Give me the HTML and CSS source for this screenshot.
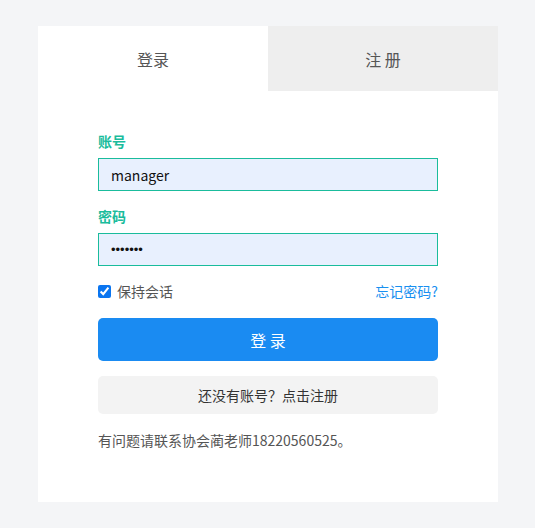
FILE: index.html
```html
<!DOCTYPE html>
<html lang="zh-CN">

<head>
    <meta charset="UTF-8">
    <title>登录</title>
    <link rel="stylesheet" href="styles.css">
</head>

<body>
    <div class="login-box">
        <div class="tab-list">
            <div class="tab tab-current">登录</div>
            <div class="tab">注 册</div>
        </div>
        <form class="login-form">
            <label class="field-label" for="username">账号</label>
            <input class="field-input" id="username" type="text" value="manager">
            <label class="field-label" for="password">密码</label>
            <input class="field-input field-password" id="password" type="password" value="1234567">
            <div class="option-row">
                <label class="keep"><input type="checkbox" checked> 保持会话</label>
                <a class="forget" href="#">忘记密码?</a>
            </div>
            <button class="btn btn-login" type="button">登 录</button>
            <button class="btn btn-register" type="button">还没有账号？点击注册</button>
            <p class="tip">有问题请联系协会蔺老师18220560525。</p>
        </form>
    </div>
</body>

</html>
```

FILE: styles.css
```css
body {
    margin: 0;
    padding-top: 26px;
    background: #f4f5f7;
    font-family: "Noto Sans CJK SC", "Noto Sans", sans-serif;
    font-size: 14px;
    color: #555;
}

.login-box {
    width: 460px;
    height: 476px;
    margin-left: 38px;
    background: #fff;
}

.tab-list {
    display: flex;
    height: 65px;
}

.tab {
    flex: 1;
    display: flex;
    align-items: center;
    justify-content: center;
    font-size: 16px;
    color: #555;
    background: #eee;
}

.tab-current {
    background: #fff;
}

.login-form {
    display: flex;
    flex-direction: column;
    padding: 40px 60px 0;
}

.field-label {
    color: #1abc9c;
    font-weight: bold;
    font-size: 14px;
    line-height: 20px;
    margin-bottom: 7px;
}

.field-input {
    box-sizing: border-box;
    height: 33px;
    padding: 0 12px;
    border: 1px solid #1abc9c;
    background: #e8f0fe;
    font-family: inherit;
    font-size: 14px;
    color: #111;
    outline: none;
    margin-bottom: 15px;
}

.field-password {
    margin-bottom: 15px;
    font-family: "Liberation Sans", sans-serif;
    font-size: 13px;
    letter-spacing: 0;
}

.option-row {
    display: flex;
    justify-content: space-between;
    align-items: center;
    height: 20px;
}

.keep {
    display: flex;
    align-items: center;
    color: #555;
}

.keep input {
    width: 13px;
    height: 13px;
    margin: 0 6px 0 0;
    accent-color: #0a75f0;
}

.forget {
    color: #1890f0;
    text-decoration: none;
}

.btn {
    border: none;
    border-radius: 5px;
    font-family: inherit;
    cursor: pointer;
}

.btn-login {
    height: 43px;
    margin-top: 17px;
    background: #1a8bf2;
    color: #fff;
    font-size: 16px;
}

.btn-register {
    height: 38px;
    margin-top: 15px;
    background: #f3f3f3;
    color: #333;
    font-size: 14px;
}

.tip {
    margin: 16px 0 0;
    line-height: 20px;
    color: #555;
}
```
